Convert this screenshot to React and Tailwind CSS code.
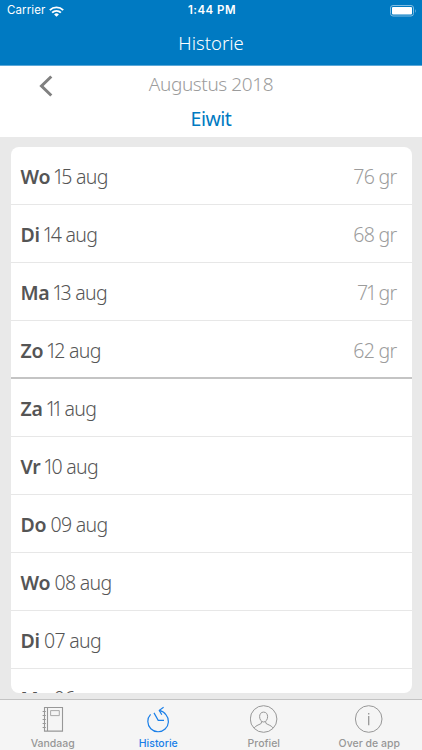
const days = [
  { day: "Wo", date: "15 aug", amount: "76 gr" },
  { day: "Di", date: "14 aug", amount: "68 gr" },
  { day: "Ma", date: "13 aug", amount: "71 gr" },
  { day: "Zo", date: "12 aug", amount: "62 gr", weekEnd: true },
  { day: "Za", date: "11 aug" },
  { day: "Vr", date: "10 aug" },
  { day: "Do", date: "09 aug" },
  { day: "Wo", date: "08 aug" },
  { day: "Di", date: "07 aug" },
  { day: "Ma", date: "06 aug" },
];

const NotebookIcon = () => (
  <svg width="28" height="28" viewBox="0 0 28 28" fill="none" stroke="currentColor" strokeWidth="1.1">
    <path d="M5.5 2.5h18v23.6h-18zM8.5 2.5v23.6" />
    <path d="M11.6 5.6h8.7v5h-8.7z" strokeWidth="0.8" />
    <path d="M3.6 6.5h3.2M3.6 10.5h3.2M3.6 14.5h3.2M3.6 18.5h3.2M3.6 22.5h3.2" />
  </svg>
);

const HistoryIcon = () => (
  <svg width="28" height="28" viewBox="0 0 28 28" fill="none" stroke="currentColor" strokeWidth="1.2">
    <path d="M6.6 9.4a10.3 10.3 0 1 0 15.3 .3q-2-3.2-6.6-4.4" />
    <path d="M19.6 2.2 15.3 5.3l2.5 4.4" />
    <path d="M10 7.9l4.2 7.5h5.8" />
  </svg>
);

const ProfileIcon = () => (
  <svg width="28" height="28" viewBox="0 0 28 28" fill="none" stroke="currentColor" strokeWidth="1">
    <circle cx="13.6" cy="14" r="13.3" />
    <path d="M13.6 7.1c2.6 0 4 1.9 4 4.6s-1.6 5.3-4 5.3-4-2.6-4-5.3 1.4-4.6 4-4.6z" />
    <path d="M11.4 16.5v1.7c-1.2 1.4-5.4 1.9-7.2 4.7M15.8 16.5v1.7c1.2 1.4 5.4 1.9 7.2 4.7" />
  </svg>
);

const InfoIcon = () => (
  <svg width="28" height="28" viewBox="0 0 28 28" fill="none" stroke="currentColor" strokeWidth="1">
    <circle cx="13.7" cy="14" r="13.3" />
    <path d="M13.7 11v9.2M13.7 8v1.6" strokeWidth="1.3" />
  </svg>
);

const tabs = [
  { label: "Vandaag", Icon: NotebookIcon },
  { label: "Historie", Icon: HistoryIcon, active: true },
  { label: "Profiel", Icon: ProfileIcon },
  { label: "Over de app", Icon: InfoIcon },
];

const StatusBar = () => (
  <div className="grid grid-cols-3 items-center h-[22px] pl-[7px] pr-[5px] font-['Inter',sans-serif] font-normal text-[11.5px]">
    <div className="flex items-center gap-[4px]">
      <span className="tracking-[0.1px]">Carrier</span>
      <svg width="15" height="11" viewBox="0 0 15 11" fill="none" stroke="currentColor" strokeWidth="1.9">
        <path d="M.8 4.1a9.6 9.6 0 0 1 13.4 0M3.1 6.7a6.2 6.2 0 0 1 8.8 0" />
        <path d="M7.5 10.8 5.1 8.4a3.4 3.4 0 0 1 4.8 0z" fill="currentColor" stroke="none" />
      </svg>
    </div>
    <span className="text-center font-semibold tracking-[0.45px]">1:44 PM</span>
    <svg className="justify-self-end" width="27" height="12" viewBox="0 0 27 12">
      <rect x=".5" y=".5" width="23" height="10.5" rx="2.5" fill="none" stroke="#7fbce2" />
      <rect x="2" y="2" width="20" height="7.5" rx="1" fill="white" />
      <path d="M25 4q1.6 2 0 4z" fill="#7fbce2" />
    </svg>
  </div>
);

// The ones are set tighter than the other digits.
const Figures = ({ text }) =>
  text.split(/(1)/).map((part, i) =>
    part === "1" ? (
      <span key={i} className="-ml-[1.5px] tracking-[-3px]">1</span>
    ) : (
      part
    )
  );

const DayRow = ({ day, date, amount, weekEnd }) => (
  <li
    className={`flex items-center justify-between h-[58px] shrink-0 pl-[10px] pr-[15px] ${
      weekEnd ? "pt-[3px] border-b-2 border-[#c4c4c4]" : "pt-[2px] border-b border-[#e7e7e7]"
    }`}
  >
    <span className="text-[#555] whitespace-pre">
      <b className="font-semibold tracking-[-0.3px]">{day}</b>
      <span className="tracking-[-0.7px]">
        {" "}
        <Figures text={date} />
      </span>
    </span>
    {amount && (
      <span className="text-[#9c9c9c] tracking-[-0.7px]">
        <Figures text={amount} />
      </span>
    )}
  </li>
);

export default function App() {
  return (
    <div className="flex flex-col w-[422px] h-[750px] overflow-hidden bg-[#e9e9e9] font-['Noto_Sans',sans-serif] font-light">
      <header className="h-[66px] shrink-0 bg-[#007ac2] text-white border-b border-[#5ba8d8]">
        <StatusBar />
        <h1 className="text-center text-[18.5px] leading-[42px]">Historie</h1>
      </header>

      <section className="h-[71px] shrink-0 bg-white grid grid-cols-[1fr_auto_1fr]">
        <button className="w-[14px] h-[22px] ml-[39px] mt-[9px] text-[#808080]">
          <svg width="14" height="22" viewBox="0 0 14 22" fill="none" stroke="currentColor" strokeWidth="3">
            <path d="M12.3 1.5 2.5 11l9.8 9.5" />
          </svg>
        </button>
        <div className="text-center">
          <p className="text-[19px] leading-[36px] tracking-[-0.4px] text-[#9c9c9c]">Augustus 2018</p>
          <p className="text-[19.5px] leading-[33px] tracking-[-0.5px] font-normal text-[#007ac2]">Eiwit</p>
        </div>
        <div />
      </section>

      <main className="flex-1 min-h-0 pt-[10px] px-[10.5px] pb-[6px]">
        <ul className="h-full overflow-hidden rounded-[8px] bg-white text-[19.5px]">
          {days.map((item) => (
            <DayRow key={item.date} {...item} />
          ))}
        </ul>
      </main>

      <nav className="grid grid-cols-4 h-[51px] shrink-0 bg-[#f5f5f5] border-t border-[#c3c3c3] font-['Inter',sans-serif] font-medium text-[10.5px]">
        {tabs.map(({ label, Icon, active }) => (
          <div
            key={label}
            className={`flex flex-col items-center pt-[5px] ${active ? "text-[#1a7fe8]" : "text-[#979797]"}`}
          >
            <Icon />
            <span className="mt-[2px] leading-[17px] whitespace-nowrap">{label}</span>
          </div>
        ))}
      </nav>
    </div>
  );
}
